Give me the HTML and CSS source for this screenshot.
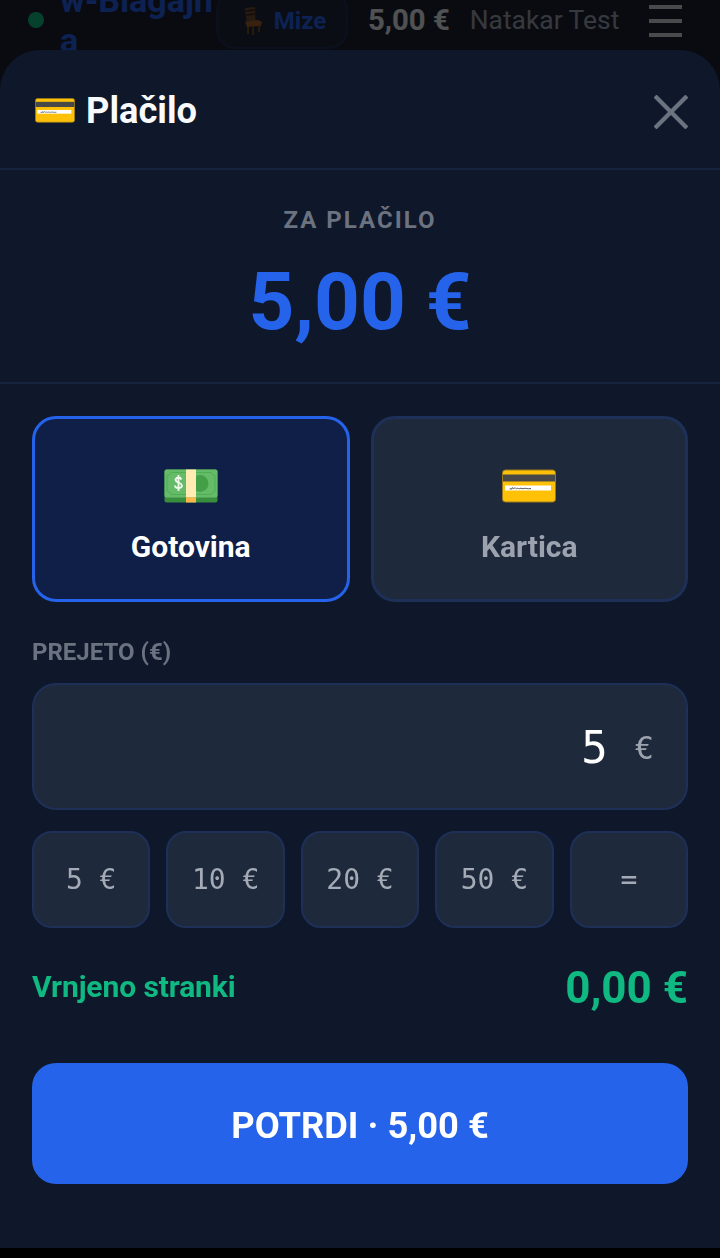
FILE: index.html
```html
<!DOCTYPE html>
<html lang="sl">
<head>
  <meta charset="UTF-8">
  <title>w-Blagajna</title>
  <link rel="stylesheet" href="styles.css">
</head>
<body>

  <svg class="defs" width="0" height="0">
    <symbol id="card" viewBox="0 -1.500 54 36">
      <rect x="0.500" y="0.500" width="53" height="32" rx="3" fill="#ffc107" stroke="#9a7a1c" stroke-width="1"/>
      <rect x="1" y="5" width="52" height="7" fill="#484848"/>
      <rect x="3" y="16" width="46" height="5" fill="#fff"/>
      <path d="M8 20c1-4 1 2 2-1s1 2 2 0 2 1 3 0 2 1 3 0 3 1 4 0 3 1 7 0" fill="none" stroke="#555" stroke-width="1"/>
    </symbol>
    <symbol id="cash" viewBox="0 -1.500 54 36">
      <rect x="0.500" y="0" width="53" height="33" rx="2" fill="#388e3c"/>
      <rect x="0.500" y="0" width="53" height="28" rx="2" fill="#66bb6a"/>
      <path d="M3 6q3 0 4-3h40q1 3 4 3v16q-3 0-4 3H7q-1-3-4-3z" fill="none" stroke="#4caf50" stroke-width="1"/>
      <circle cx="36" cy="14" r="8.500" fill="#43a047"/>
      <path d="M17.500 10q-1-2-3-2t-3 2q0 2 3 3t3.500 3q0 2.500-3.500 2.500t-3.500-2.500M14.500 5.500v16" fill="none" stroke="#f1f8e9" stroke-width="1.800"/>
      <rect x="22" y="0" width="10" height="28" fill="#ffecb3"/>
      <rect x="22" y="28" width="10" height="5" fill="#ffb74d"/>
    </symbol>
    <symbol id="chair" viewBox="0 0 18 28">
      <path d="M1 1l10-1 .5 14-9 1z" fill="#6d4c33"/>
      <path d="M2 4l9-1M2 8l9-1" stroke="#3e2723" stroke-width="1.500"/>
      <path d="M1 15l13-2 4 2-1 4-14 1z" fill="#a0632b"/>
      <path d="M4 20v7M15 19v6M9 20v8" stroke="#7a4a20" stroke-width="2" fill="none"/>
    </symbol>
  </svg>

  <div id="topbar">
    <span class="status-dot"></span>
    <div class="brand">w-Blagajn<br>a</div>
    <button class="tables-btn"><svg class="chair-icon"><use href="#chair"/></svg>Mize</button>
    <span class="top-total">5,00 €</span>
    <span class="top-user">Natakar Test</span>
    <span class="burger">
      <i></i><i></i><i></i>
    </span>
  </div>

  <div id="overlay">
    <div id="sheet">

      <div class="sheet-head">
        <h2 class="sheet-title"><svg class="title-icon"><use href="#card"/></svg>Plačilo</h2>
        <svg class="close-icon" viewBox="0 0 32 32"><path d="M1 1l30 30M31 1L1 31" fill="none" stroke="currentColor" stroke-width="4"/></svg>
      </div>

      <div class="due">
        <div class="due-label">ZA PLAČILO</div>
        <div class="due-amount">5,00 €</div>
      </div>

      <div class="sheet-body">
        <div class="methods">
          <button class="method active"><svg class="method-icon"><use href="#cash"/></svg>Gotovina</button>
          <button class="method"><svg class="method-icon"><use href="#card"/></svg>Kartica</button>
        </div>

        <div class="field-label">PREJETO (€)</div>
        <div class="amount-input">
          <span class="amount-value">5</span>
          <span class="amount-unit">€</span>
        </div>

        <div class="quick">
          <button>5 €</button>
          <button>10 €</button>
          <button>20 €</button>
          <button>50 €</button>
          <button>=</button>
        </div>

        <div class="change">
          <span class="change-label">Vrnjeno stranki</span>
          <span class="change-value">0,00 €</span>
        </div>

        <button class="confirm">POTRDI · 5,00 €</button>
      </div>

    </div>
  </div>

</body>
</html>
```

FILE: styles.css
```css
* {
  box-sizing: border-box;
}

html, body {
  margin: 0;
  padding: 0;
  height: 100%;
}

body {
  background: #1c2233;
  color: #fff;
  font-family: Roboto, sans-serif;
  overflow: hidden;
  position: relative;
}

button {
  font-family: inherit;
  cursor: pointer;
}

.defs {
  position: absolute;
}

#topbar {
  display: flex;
  align-items: center;
  height: 40px;
  padding-left: 28px;
}

.status-dot {
  width: 16px;
  height: 16px;
  border-radius: 50%;
  background: #10b981;
  flex: none;
}

.brand {
  margin-left: 16px;
  width: 156px;
  color: #2563eb;
  font-size: 34px;
  font-weight: 700;
  line-height: 40px;
  flex: none;
}

.tables-btn {
  display: flex;
  align-items: center;
  justify-content: center;
  gap: 12px;
  width: 132px;
  height: 58px;
  padding: 2px 0 0 6px;
  flex: none;
  background: #1e293b;
  border: 2px solid #1e3058;
  border-radius: 20px;
  color: #2563eb;
  font-size: 24px;
  font-weight: 700;
}

.chair-icon {
  width: 18px;
  height: 28px;
}

.top-total {
  margin-left: 20px;
  font-size: 29.3px;
  font-weight: 700;
  color: #e5e7eb;
}

.top-user {
  margin-left: 20px;
  font-size: 26.4px;
  color: #9ca3af;
  white-space: nowrap;
}

.burger {
  display: flex;
  flex-direction: column;
  gap: 10px;
  margin: 2px 0 0 30px;
  width: 33px;
  flex: none;
}

.burger i {
  display: block;
  height: 4px;
  background: #d1d5db;
}

#overlay {
  position: fixed;
  inset: 0;
  background: rgba(0, 0, 0, 0.65);
  display: flex;
  flex-direction: column;
  justify-content: flex-start;
  padding-top: 50px;
}

#overlay::after {
  content: "";
  height: 10px;
  background: #000;
  flex: none;
}

#sheet {
  flex: 1;
  background: #0f172a;
  border-radius: 40px 40px 0 0;
}

.sheet-head {
  display: flex;
  align-items: center;
  justify-content: space-between;
  height: 120px;
  padding: 3px 32px 0;
  border-bottom: 2px solid #15233f;
}

.sheet-title {
  display: flex;
  align-items: center;
  gap: 11px;
  margin: 0;
  font-size: 36.3px;
  font-weight: 700;
  color: #f8fafc;
}

.title-icon {
  width: 40px;
  height: 26.7px;
  margin-left: 3px;
}

.close-icon {
  width: 34px;
  height: 34px;
  margin-top: 2px;
  color: #6b7280;
}

.due {
  height: 214px;
  padding-top: 36px;
  text-align: center;
  border-bottom: 2px solid #15233f;
}

.due-label {
  font-size: 24px;
  font-weight: 700;
  line-height: 28px;
  letter-spacing: 2px;
  color: #6b7280;
}

.due-amount {
  margin-top: 21px;
  font-size: 80px;
  font-weight: 700;
  line-height: 94px;
  color: #2563eb;
}

.sheet-body {
  padding: 32px 32px 0;
}

.methods {
  display: flex;
  gap: 21px;
}

.method {
  flex: 1;
  display: flex;
  flex-direction: column;
  align-items: center;
  gap: 25px;
  height: 186px;
  padding-top: 49px;
  background: #1e293b;
  border: 3px solid #1e3058;
  border-radius: 24px;
  color: #9ca3af;
  font-size: 30px;
  font-weight: 700;
}

.method.active {
  background: #0f1f47;
  border-color: #2563eb;
  color: #fff;
}

.method-icon {
  width: 54px;
  height: 36px;
}

.field-label {
  margin-top: 36px;
  font-size: 24px;
  font-weight: 700;
  line-height: 28px;
  color: #6b7280;
}

.amount-input {
  display: flex;
  align-items: center;
  justify-content: flex-end;
  gap: 27px;
  height: 127px;
  margin-top: 17px;
  padding: 2px 32px 0 0;
  background: #1e293b;
  border: 2px solid #1e3058;
  border-radius: 24px;
}

.amount-value {
  font-family: "DejaVu Sans Mono", monospace;
  font-size: 44px;
  color: #fff;
}

.amount-unit {
  font-family: "DejaVu Sans Mono", monospace;
  font-size: 32px;
  color: #9ca3af;
}

.quick {
  display: flex;
  gap: 16px;
  margin-top: 21px;
}

.quick button {
  flex: 1;
  height: 97px;
  padding: 0;
  background: #1e293b;
  border: 2px solid #1e3058;
  border-radius: 20px;
  color: #a4abb6;
  font-family: "DejaVu Sans Mono", monospace;
  font-size: 28px;
}

.change {
  display: flex;
  align-items: center;
  justify-content: space-between;
  margin-top: 32px;
  height: 56px;
  color: #10b981;
}

.change-label {
  padding-bottom: 3px;
  font-size: 30px;
  font-weight: 700;
  letter-spacing: -0.1px;
}

.change-value {
  font-size: 44px;
  font-weight: 700;
}

.confirm {
  display: block;
  width: 100%;
  height: 121px;
  margin-top: 47px;
  padding-top: 5px;
  background: #2563eb;
  border: none;
  border-radius: 24px;
  color: #fff;
  font-size: 36.3px;
  font-weight: 700;
}
```
